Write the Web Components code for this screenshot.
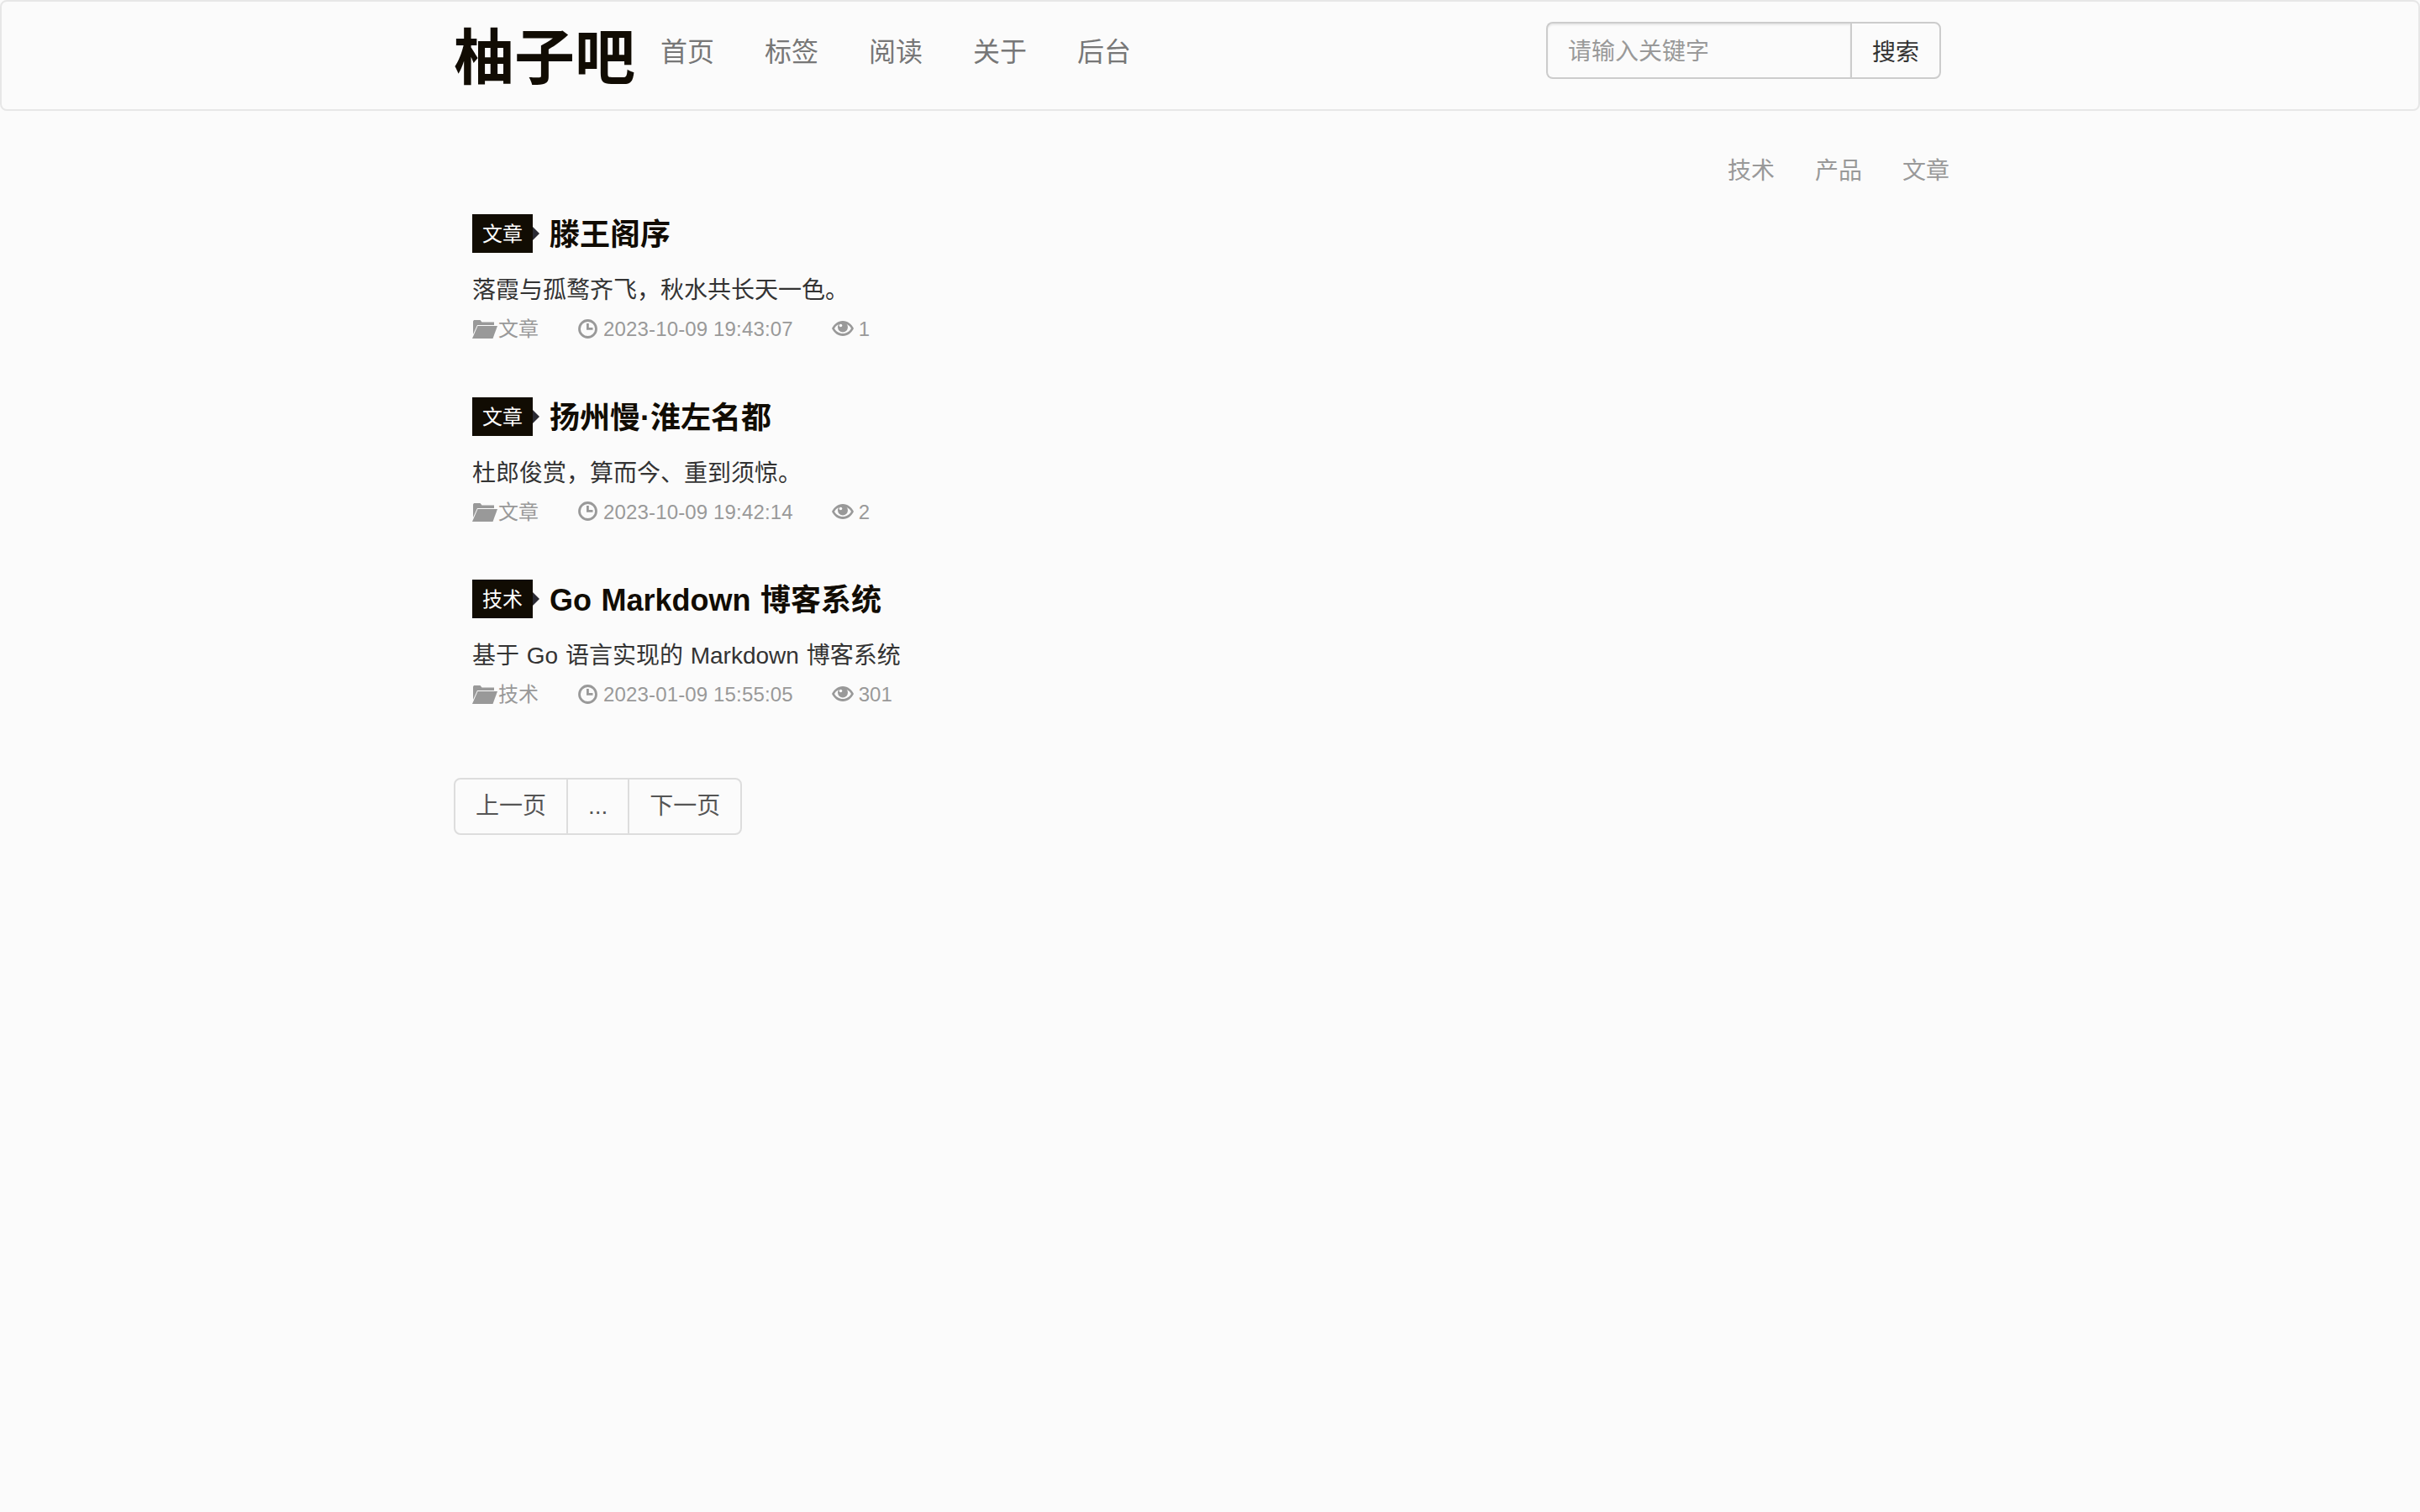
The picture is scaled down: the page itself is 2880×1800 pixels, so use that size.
<!DOCTYPE html>
<html lang="zh-CN">
<head>
<meta charset="utf-8">
<title>柚子吧</title>
<style>
  html, body { margin: 0; background: #fbfbfb; }
  body {
    font-family: "Liberation Sans", "Noto Sans CJK SC", sans-serif;
    font-size: 28px;
    color: #333;
    min-height: 1800px;
  }
</style>
</head>
<body>
<site-header>
  <nav-link>首页</nav-link>
  <nav-link>标签</nav-link>
  <nav-link>阅读</nav-link>
  <nav-link>关于</nav-link>
  <nav-link>后台</nav-link>
</site-header>
<page-main>
  <category-nav>
    <span>技术</span>
    <span>产品</span>
    <span>文章</span>
  </category-nav>
  <post-item tag="文章" date="2023-10-09 19:43:07" views="1">
    <span slot="title">滕王阁序</span>
    落霞与孤鹜齐飞，秋水共长天一色。
  </post-item>
  <post-item tag="文章" date="2023-10-09 19:42:14" views="2">
    <span slot="title">扬州慢·淮左名都</span>
    杜郎俊赏，算而今、重到须惊。
  </post-item>
  <post-item tag="技术" date="2023-01-09 15:55:05" views="301">
    <span slot="title">Go Markdown 博客系统</span>
    基于 Go 语言实现的 Markdown 博客系统
  </post-item>
  <pager-bar></pager-bar>
</page-main>

<script>
class SiteHeader extends HTMLElement {
  connectedCallback() {
    this.attachShadow({ mode: 'open' });
    this.shadowRoot.innerHTML = `
      <style>
        :host {
          display: block;
          height: 132px;
          box-sizing: border-box;
          border: 2px solid #e7e7e7;
          border-radius: 8px;
          background: #fbfbfb;
        }
        .inner {
          width: 1800px;
          height: 100%;
          margin-left: 538px;
          display: flex;
          align-items: center;
        }
        .brand {
          font-size: 72px;
          font-weight: 700;
          color: #110c03;
          line-height: 72px;
          margin-right: 30px;
          position: relative;
          top: 3px;
        }
        .links { display: flex; gap: 60px; flex: 1; margin-bottom: 8px; }
        .search { display: flex; height: 68px; margin: 0 30px 12px 0; }
        input {
          width: 362px;
          box-sizing: border-box;
          height: 68px;
          padding: 3px 24px 0;
          border: 2px solid #ccc;
          border-right: 0;
          border-radius: 8px 0 0 8px;
          background: #fbfbfb;
          box-shadow: inset 0 2px 2px rgba(0, 0, 0, .075);
          font: 28px "Liberation Sans", "Noto Sans CJK SC", sans-serif;
          color: #555;
          outline: none;
        }
        input::placeholder { color: #999; opacity: 1; }
        button {
          width: 108px;
          box-sizing: border-box;
          height: 68px;
          padding: 0;
          border: 2px solid #ccc;
          border-radius: 0 8px 8px 0;
          background: #fbfbfb;
          font: 28px "Liberation Sans", "Noto Sans CJK SC", sans-serif;
          color: #333;
        }
      </style>
      <div class="inner">
        <div class="brand">柚子吧</div>
        <div class="links"><slot></slot></div>
        <div class="search">
          <input type="text" placeholder="请输入关键字">
          <button type="button">搜索</button>
        </div>
      </div>
    `;
  }
}
customElements.define('site-header', SiteHeader);

class NavLink extends HTMLElement {
  connectedCallback() {
    this.attachShadow({ mode: 'open' });
    this.shadowRoot.innerHTML = `
      <style>
        :host {
          display: block;
          font-size: 32px;
          line-height: 40px;
          color: #777;
        }
      </style>
      <slot></slot>
    `;
  }
}
customElements.define('nav-link', NavLink);

class PageMain extends HTMLElement {
  connectedCallback() {
    this.attachShadow({ mode: 'open' });
    this.shadowRoot.innerHTML = `
      <style>
        :host {
          display: block;
          width: 1800px;
          margin-left: 540px;
        }
      </style>
      <slot></slot>
    `;
  }
}
customElements.define('page-main', PageMain);

class CategoryNav extends HTMLElement {
  connectedCallback() {
    this.attachShadow({ mode: 'open' });
    this.shadowRoot.innerHTML = `
      <style>
        :host {
          display: flex;
          justify-content: flex-end;
          gap: 48px;
          padding: 52px 20px 0 0;
          height: 38px;
          line-height: 40px;
          font-size: 28px;
          color: #999;
        }
      </style>
      <slot></slot>
    `;
  }
}
customElements.define('category-nav', CategoryNav);

class PostItem extends HTMLElement {
  connectedCallback() {
    const tag = this.getAttribute('tag');
    const date = this.getAttribute('date');
    const views = this.getAttribute('views');
    this.attachShadow({ mode: 'open' });
    this.shadowRoot.innerHTML = `
      <style>
        :host {
          display: block;
          margin: 33px 0 0 22px;
          height: 184.5px;
        }
        .head { display: flex; align-items: flex-start; height: 46px; }
        .badge {
          position: relative;
          width: 72px;
          height: 46px;
          line-height: 48px;
          text-align: center;
          background: #110c03;
          color: #fff;
          font-size: 24px;
          margin-right: 20px;
        }
        .badge::after {
          content: '';
          position: absolute;
          left: 72px;
          top: 15px;
          border-left: 8px solid #2a2a33;
          border-top: 8px solid transparent;
          border-bottom: 8px solid transparent;
        }
        h2 {
          margin: 0;
          font-size: 36px;
          line-height: 50px;
          font-weight: 700;
          color: #110c03;
          word-spacing: 1.5px;
        }
        .desc {
          margin-top: 25px;
          height: 40px;
          line-height: 40px;
          font-size: 28px;
          color: #333;
          word-spacing: 1px;
        }
        .meta {
          display: flex;
          align-items: center;
          margin-top: 11px;
          height: 30px;
          line-height: 30px;
          font-size: 24px;
          color: #999;
        }
        svg { display: block; flex: none; fill: #999; }
        .cat { margin-left: 1px; margin-right: 47px; }
        .date { margin-left: 7px; margin-right: 46px; letter-spacing: .15px; }
        .views { margin-left: 6px; }
      </style>
      <div class="head">
        <div class="badge">${tag}</div>
        <h2><slot name="title"></slot></h2>
      </div>
      <div class="desc"><slot></slot></div>
      <div class="meta">
        <svg width="30" height="22" viewBox="0 0 30 22">
          <path d="M1 1.500 L2 0 H9.500 L11.500 2.500 H26 V6 H6 L1 17 Z"/>
          <path d="M6.500 7 H30 L24.500 22 H0 Z"/>
        </svg>
        <span class="cat">${tag}</span>
        <svg width="23" height="23" viewBox="0 0 23 23" style="margin-top:-2px">
          <circle cx="11.500" cy="11.500" r="10" fill="none" stroke="#999" stroke-width="2.800"/>
          <path d="M10 5 H12.800 V10 H17.500 V12.800 H10 Z"/>
        </svg>
        <span class="date">${date}</span>
        <svg width="26" height="18" viewBox="0 0 26 18" style="margin-top:-2px">
          <path d="M13 0 C19 0 23.500 4 26 9 C23.500 14 19 18 13 18 C7 18 2.500 14 0 9 C2.500 4 7 0 13 0 Z"/>
          <path fill="#fbfbfb" d="M13 3 C17.500 3 21 5.500 23 9 C21 12.500 17.500 15 13 15 C8.500 15 5 12.500 3 9 C5 5.500 8.500 3 13 3 Z"/>
          <circle cx="13" cy="7.500" r="6"/>
          <circle cx="10.500" cy="5.500" r="1.800" fill="#fbfbfb"/>
        </svg>
        <span class="views">${views}</span>
      </div>
    `;
  }
}
customElements.define('post-item', PostItem);

class PagerBar extends HTMLElement {
  connectedCallback() {
    this.attachShadow({ mode: 'open' });
    this.shadowRoot.innerHTML = `
      <style>
        :host {
          display: inline-flex;
          margin-top: 51.5px;
          height: 68px;
          line-height: 40px;
          font-size: 28px;
          color: #555;
          box-sizing: border-box;
          border: 2px solid #ddd;
          border-radius: 8px;
        }
        span { padding: 12px 24px; box-sizing: border-box; height: 64px; }
        span + span { border-left: 2px solid #ddd; }
      </style>
      <span>上一页</span><span>...</span><span>下一页</span>
    `;
  }
}
customElements.define('pager-bar', PagerBar);
</script>
</body>
</html>
